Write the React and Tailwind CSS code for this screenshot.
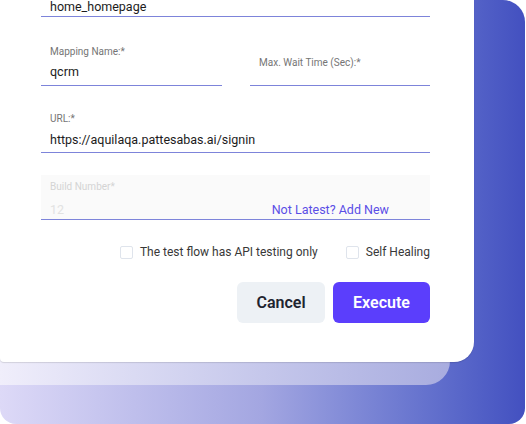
import React from 'react';

// Execute-test dialog, bottom part of a stacked card
const Checkbox = ({ label }) => (
  <label className="flex items-center gap-[7px]">
    <span className="h-[13px] w-[13px] rounded-[2px] border border-[#dfe4ec] bg-white" />
    <span className="text-[12px] leading-[16px] text-[#383838]">{label}</span>
  </label>
);

export default function App() {
  return (
    <div className="h-[424px] w-[526px] overflow-hidden bg-white" style={{ fontFamily: 'Roboto, "Liberation Sans", sans-serif' }}>
      <div className="flex h-[424px] w-[525px] flex-col rounded-tr-[22px] rounded-b-[16px] bg-linear-to-r from-[#ddd9f7] via-[#a3a6e1] via-50% to-[#4350c0]">
        {/* front card */}
        <div className="relative z-10 h-[362px] w-[474px] rounded-br-[20px] rounded-bl-[4px] bg-white pl-[41px] pr-[44px] shadow-[0_1px_1px_rgba(0,0,0,0.12)]">
          <div className="flex flex-col">
            <div className="h-[17px] border-b border-[#7d84da] pl-[9px]">
              <span className="-mt-[1px] block text-[12.5px] leading-[16px] text-[#1c1c1c]">home_homepage</span>
            </div>

            <div className="mt-[29px] grid grid-cols-[181px_180px] gap-[28px]">
              <div className="flex h-[40px] flex-col border-b border-[#7d84da]">
                <span className="pl-[9px] text-[10px] leading-[12px] text-[#757575]">Mapping Name:*</span>
                <span className="mt-[6px] pl-[9px] text-[12.5px] leading-[16px] text-[#1c1c1c]">qcrm</span>
              </div>
              <div className="flex h-[40px] flex-col border-b border-[#7d84da]">
                <span className="mt-[11px] pl-[9px] text-[10px] leading-[12px] text-[#757575]">Max. Wait Time (Sec):*</span>
              </div>
            </div>

            <div className="mt-[27px] flex h-[40px] flex-col border-b border-[#7d84da]">
              <span className="pl-[9px] text-[10px] leading-[12px] text-[#757575]">URL:*</span>
              <span className="mt-[7px] pl-[9px] text-[12.5px] leading-[16px] text-[#1c1c1c]">https://aquilaqa.pattesabas.ai/signin</span>
            </div>

            <div className="mt-[22px] flex h-[45px] flex-col border-b border-[#7d84da] bg-[#fafafa]">
              <span className="mt-[6px] pl-[9px] text-[10px] leading-[12px] text-[#d4d4d4]">Build Number*</span>
              <div className="mt-[9px] flex items-center justify-between pr-[41px]">
                <span className="pl-[9px] text-[12.5px] leading-[16px] text-[#e2e2e2]">12</span>
                <span className="text-[12.5px] leading-[16px] text-[#5a4ee6]">Not Latest? Add New</span>
              </div>
            </div>

            <div className="mt-[24px] flex justify-end gap-[28px]">
              <Checkbox label="The test flow has API testing only" />
              <Checkbox label="Self Healing" />
            </div>

            <div className="mt-[22px] flex justify-end gap-[8px]">
              <button className="h-[41px] w-[88px] rounded-[6px] bg-[#edf1f5] text-[16px] font-semibold text-[#1f2430]">Cancel</button>
              <button className="h-[41px] w-[97px] rounded-[6px] bg-[#5b3efc] text-[16px] font-semibold text-white">Execute</button>
            </div>
          </div>
        </div>
        {/* middle layer strip */}
        <div className="-mt-[24px] h-[47px] w-[450px] rounded-br-[24px] bg-linear-to-r from-[#f0eefb] to-[#a8acdf]" />
      </div>
    </div>
  );
}
